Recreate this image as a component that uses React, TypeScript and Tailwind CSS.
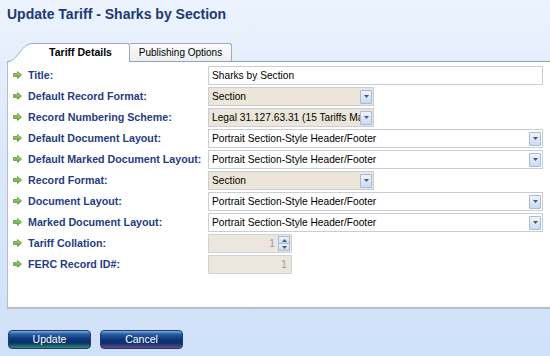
import React from "react";

const FONT = "font-['Liberation_Sans',Arial,sans-serif]";

function Arrow() {
  return (
    <svg width="9" height="8" viewBox="0 0 9 8" className="shrink-0">
      <defs>
        <linearGradient id="ag" x1="0" y1="0" x2="0" y2="1">
          <stop offset="0" stopColor="#b9e08a" />
          <stop offset="1" stopColor="#4f9a2a" />
        </linearGradient>
      </defs>
      <path d="M0.5 2.5 H4.5 V0.5 L8.5 4 L4.5 7.5 V5.5 H0.5 Z" fill="url(#ag)" stroke="#5c9a38" strokeWidth="0.8" strokeLinejoin="round" />
    </svg>
  );
}

function DropBtn() {
  return (
    <div className="w-[12px] h-[14px] border border-[#a6bcd8] bg-[linear-gradient(#eef4fc,#c9dbf2)] flex items-center justify-center rounded-[1px] shrink-0">
      <svg width="5" height="3" viewBox="0 0 5 3">
        <path d="M0 0 H5 L2.5 3 Z" fill="#4b5a70" />
      </svg>
    </div>
  );
}

function TextBox({ value, wide = true }: { value: string; wide?: boolean }) {
  return (
    <div className={`h-[19px] ${wide ? "w-[335px]" : "w-[166px]"} border border-[#c9ced6] bg-white flex items-center px-[3px] text-[10.2px] text-black whitespace-nowrap overflow-hidden`}>
      {value}
    </div>
  );
}

function Select({ value, wide, beige }: { value: string; wide: boolean; beige?: boolean }) {
  return (
    <div className={`h-[19px] ${wide ? "w-[335px]" : "w-[166px]"} border border-[#c9ced6] ${beige ? "bg-[#ece6da]" : "bg-white"} flex items-center pl-[3px] pr-[1px] text-[10.2px] text-black`}>
      <span className="flex-1 whitespace-nowrap overflow-hidden">{value}</span>
      <DropBtn />
    </div>
  );
}

function NumBox({ spin }: { spin?: boolean }) {
  return (
    <div className="h-[19px] w-[84px] border border-[#d2d2d2] bg-[#ece7de] flex items-center pr-[1px] text-[10.2px] text-[#9a9a9a]">
      <span className="flex-1 text-right pr-[3px]">1</span>
      {spin && (
        <div className="flex flex-col w-[12px] h-[15px]">
          <div className="flex-1 border border-[#a6bcd8] bg-[linear-gradient(#eef4fc,#c9dbf2)] flex items-center justify-center">
            <svg width="5" height="3" viewBox="0 0 5 3"><path d="M0 3 H5 L2.5 0 Z" fill="#4b5a70" /></svg>
          </div>
          <div className="flex-1 border border-t-0 border-[#a6bcd8] bg-[linear-gradient(#eef4fc,#c9dbf2)] flex items-center justify-center">
            <svg width="5" height="3" viewBox="0 0 5 3"><path d="M0 0 H5 L2.5 3 Z" fill="#4b5a70" /></svg>
          </div>
        </div>
      )}
    </div>
  );
}

const PORTRAIT = "Portrait Section-Style Header/Footer";

const rows: { label: string; field: React.ReactNode }[] = [
  { label: "Title:", field: <TextBox value="Sharks by Section" /> },
  { label: "Default Record Format:", field: <Select value="Section" wide={false} beige /> },
  { label: "Record Numbering Scheme:", field: <Select value="Legal 31.127.63.31 (15 Tariffs Max)" wide={false} beige /> },
  { label: "Default Document Layout:", field: <Select value={PORTRAIT} wide /> },
  { label: "Default Marked Document Layout:", field: <Select value={PORTRAIT} wide /> },
  { label: "Record Format:", field: <Select value="Section" wide={false} beige /> },
  { label: "Document Layout:", field: <Select value={PORTRAIT} wide /> },
  { label: "Marked Document Layout:", field: <Select value={PORTRAIT} wide /> },
  { label: "Tariff Collation:", field: <NumBox spin /> },
  { label: "FERC Record ID#:", field: <NumBox /> },
];

function GlossButton({ label, glow }: { label: string; glow: string }) {
  return (
    <button
      className={`w-[83px] h-[19px] rounded-[4px] border border-[#1d3c6b] text-white text-[10.5px] leading-none flex items-center justify-center ${glow}`}
    >
      {label}
    </button>
  );
}

export default function App() {
  return (
    <div className={`w-[550px] h-[356px] overflow-hidden bg-[linear-gradient(#ecf3fd,#dce8fa_40%,#cfe1f9)] ${FONT}`}>
      <h1 className="pl-[7px] pt-[4px] text-[14px] leading-[20px] font-bold text-[#1e3876]">
        Update Tariff - Sharks by Section
      </h1>
      <div className="mt-[19px] pl-[8px] flex items-end h-[18px]">
        <div className="flex h-[18px] relative z-10">
          <svg width="25" height="19" viewBox="0 0 25 19" className="shrink-0 -mb-px">
            <path d="M0 19 C5 18, 8 14, 12 9 C16 4, 19 0.5, 25 0.5 L25 19 Z" fill="#fff" />
            <path d="M0 18.5 C5 18, 8 14, 12 9 C16 4, 19 0.5, 25 0.5" fill="none" stroke="#9eabbd" />
          </svg>
          <div className="w-[98px] h-[19px] bg-white border-t border-r border-[#9eabbd] rounded-tr-[3px] flex items-center justify-center text-[10.5px] font-bold text-black -ml-px pb-[1px]">
            Tariff Details
          </div>
        </div>
        <div className="w-[102px] h-[18px] bg-[linear-gradient(#fbfbfb,#eceef1)] border-t border-r border-[#9eabbd] rounded-tr-[3px] flex items-center justify-center text-[10px] text-black">
          Publishing Options
        </div>
      </div>
      <div className="ml-[7px] h-[248px] bg-white border-t border-[#94a3b8] border-l border-l-[#b3bfce] border-b-2 border-b-[#b7bfca] pt-[4px]">
        <div className="flex flex-col gap-[2px]">
          {rows.map((r) => (
            <div key={r.label} className="flex items-center h-[19px]">
              <div className="w-[200px] flex items-center pl-[5px]">
                <Arrow />
                <span className="ml-[6px] text-[10.7px] font-bold text-[#1f3d85] whitespace-nowrap">{r.label}</span>
              </div>
              {r.field}
            </div>
          ))}
        </div>
      </div>
      <div className="flex gap-[9px] pl-[8px] mt-[21px]">
        <GlossButton
          label="Update"
          glow="bg-[linear-gradient(#7eaee0_0%,#2a5fa3_18%,#0c3577_50%,#0a2f6c_70%,#2f8f6a_100%)]"
        />
        <GlossButton
          label="Cancel"
          glow="bg-[linear-gradient(#7eaee0_0%,#2a5fa3_18%,#0c3577_50%,#0a2f6c_70%,#6a4a86_100%)]"
        />
      </div>
    </div>
  );
}
